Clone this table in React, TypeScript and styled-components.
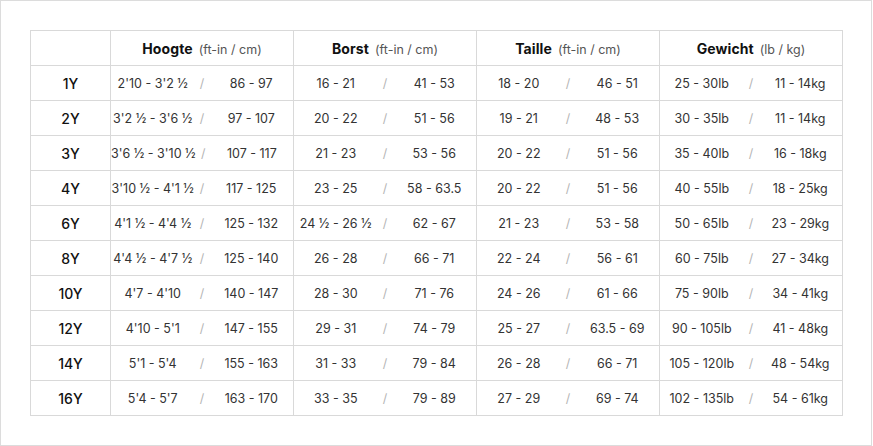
import React from "react";
import styled, { createGlobalStyle } from "styled-components";

const Global = createGlobalStyle`
  html, body { margin: 0; padding: 0; background: #fff; }
  body { font-family: "Inter", "Roboto", sans-serif; }
`;

const Frame = styled.div`
  box-sizing: border-box;
  width: 872px;
  height: 446px;
  border: 1px solid #dcdcdc;
  padding: 29px 28px 0 29px;
  background: #fff;
`;

const Table = styled.table`
  border-collapse: collapse;
  table-layout: fixed;
  width: 813px;
`;

const HeadCell = styled.th`
  height: 34px;
  border: 1px solid #d9d9d9;
  padding: 0;
  text-align: center;
  font-weight: 400;
  white-space: nowrap;
`;

const Title = styled.span`
  font-size: 14px;
  font-weight: 700;
  color: #111;
  letter-spacing: 0.1px;
`;

const Unit = styled.span`
  font-size: 12.5px;
  color: #555;
  margin-left: 6px;
  font-weight: 400;
`;

const Row = styled.tr``;

const LabelCell = styled.td`
  height: 34px;
  border: 1px solid #d9d9d9;
  padding: 0;
  text-align: center;
  font-size: 14px;
  font-weight: 500;
  color: #111;
`;

const DataCell = styled.td`
  height: 34px;
  border: 1px solid #d9d9d9;
  padding: 0;
`;

const Pair = styled.div`
  display: flex;
  align-items: center;
  font-size: 12.5px;
  color: #333;
  white-space: nowrap;
`;

const Side = styled.span`
  flex: 1;
  text-align: center;
`;

const Slash = styled.span`
  width: 15px;
  text-align: center;
  color: #b5b5b5;
`;

const cols = [
  { title: "Hoogte", unit: "(ft-in / cm)" },
  { title: "Borst", unit: "(ft-in / cm)" },
  { title: "Taille", unit: "(ft-in / cm)" },
  { title: "Gewicht", unit: "(lb / kg)" },
];

const rows: [string, [string, string][]][] = [
  ["1Y", [["2'10 - 3'2 ½", "86 - 97"], ["16 - 21", "41 - 53"], ["18 - 20", "46 - 51"], ["25 - 30lb", "11 - 14kg"]]],
  ["2Y", [["3'2 ½ - 3'6 ½", "97 - 107"], ["20 - 22", "51 - 56"], ["19 - 21", "48 - 53"], ["30 - 35lb", "11 - 14kg"]]],
  ["3Y", [["3'6 ½ - 3'10 ½", "107 - 117"], ["21 - 23", "53 - 56"], ["20 - 22", "51 - 56"], ["35 - 40lb", "16 - 18kg"]]],
  ["4Y", [["3'10 ½ - 4'1 ½", "117 - 125"], ["23 - 25", "58 - 63.5"], ["20 - 22", "51 - 56"], ["40 - 55lb", "18 - 25kg"]]],
  ["6Y", [["4'1 ½ - 4'4 ½", "125 - 132"], ["24 ½ - 26 ½", "62 - 67"], ["21 - 23", "53 - 58"], ["50 - 65lb", "23 - 29kg"]]],
  ["8Y", [["4'4 ½ - 4'7 ½", "125 - 140"], ["26 - 28", "66 - 71"], ["22 - 24", "56 - 61"], ["60 - 75lb", "27 - 34kg"]]],
  ["10Y", [["4'7 - 4'10", "140 - 147"], ["28 - 30", "71 - 76"], ["24 - 26", "61 - 66"], ["75 - 90lb", "34 - 41kg"]]],
  ["12Y", [["4'10 - 5'1", "147 - 155"], ["29 - 31", "74 - 79"], ["25 - 27", "63.5 - 69"], ["90 - 105lb", "41 - 48kg"]]],
  ["14Y", [["5'1 - 5'4", "155 - 163"], ["31 - 33", "79 - 84"], ["26 - 28", "66 - 71"], ["105 - 120lb", "48 - 54kg"]]],
  ["16Y", [["5'4 - 5'7", "163 - 170"], ["33 - 35", "79 - 89"], ["27 - 29", "69 - 74"], ["102 - 135lb", "54 - 61kg"]]],
];

export default function App() {
  return (
    <>
      <Global />
      <Frame>
        <Table>
          <colgroup>
            <col style={{ width: 80 }} />
            <col style={{ width: 183 }} />
            <col style={{ width: 183 }} />
            <col style={{ width: 183 }} />
            <col style={{ width: 183 }} />
          </colgroup>
          <thead>
            <Row>
              <HeadCell />
              {cols.map((c) => (
                <HeadCell key={c.title}>
                  <Title>{c.title}</Title>
                  <Unit>{c.unit}</Unit>
                </HeadCell>
              ))}
            </Row>
          </thead>
          <tbody>
            {rows.map(([label, cells]) => (
              <Row key={label}>
                <LabelCell>{label}</LabelCell>
                {cells.map(([a, b], i) => (
                  <DataCell key={i}>
                    <Pair>
                      <Side>{a}</Side>
                      <Slash>/</Slash>
                      <Side>{b}</Side>
                    </Pair>
                  </DataCell>
                ))}
              </Row>
            ))}
          </tbody>
        </Table>
      </Frame>
    </>
  );
}
